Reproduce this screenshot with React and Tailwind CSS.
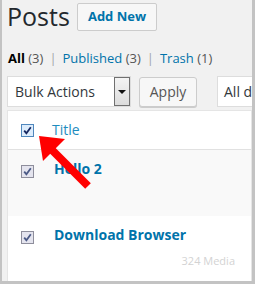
const CheckBox = ({ active }) => (
  <svg width="13" height="13" viewBox="0 0 13 13" className="block">
    <rect
      x="0.5"
      y="0.5"
      width="12"
      height="12"
      fill={active ? "#dcecfc" : "#e4e4ee"}
      stroke={active ? "#4f87bd" : "#8e8e9c"}
    />
    <path
      d="M3.2 6.6 L5.4 9.2 L9.8 3.2"
      fill="none"
      stroke={active ? "#152660" : "#4b5a86"}
      strokeWidth="1.8"
    />
  </svg>
);

const Sep = () => <span className="mx-[6px] text-[#a0a5aa]">|</span>;

const App = () => {
  return (
    <div
      className="relative w-[255px] h-[284px] overflow-hidden bg-[#f1f1f1] border-l-2 border-r-[3px] border-b-[3px] border-[#c3c3c3]"
      style={{ fontFamily: '"Open Sans", "Liberation Sans", sans-serif' }}
    >
      <div className="flex items-start pl-[5px]">
        <h1 className="w-[70px] mt-[1px] text-[25px] leading-[30px] text-[#23282d] font-normal">
          Posts
        </h1>
        <button className="mt-[3px] w-[80px] h-[28px] rounded-[2px] border border-[#ccc] bg-[#f7f7f7] text-[13px] font-bold text-[#0073aa]">
          Add New
        </button>
      </div>

      <div className="mt-[17px] pl-[6px] text-[13px] leading-[20px] whitespace-nowrap text-[#555]">
        <span className="font-bold text-[#000]">All</span> (3)
        <Sep />
        <span className="text-[#0073aa]">Published</span> (3)
        <Sep />
        <span className="text-[#0073aa]">Trash</span> (1)
      </div>

      <div className="mt-[8px] pl-[5px] flex items-center whitespace-nowrap">
        <div className="flex shrink-0 w-[124px] h-[31px] bg-white border border-[#ddd]">
          <span className="flex-1 pl-[7px] text-[14px] leading-[29px] text-[#32373c]">
            Bulk Actions
          </span>
          <span className="flex items-center justify-center w-[16px] h-[29px] border border-[#707070] bg-gradient-to-b from-[#f4f4f4] to-[#dcdcdc]">
            <span className="block w-0 h-0 border-l-[4px] border-r-[4px] border-t-[4px] border-l-transparent border-r-transparent border-t-[#111]" />
          </span>
        </div>
        <button className="shrink-0 ml-[8px] w-[58px] h-[30px] rounded-[3px] border border-[#ccc] bg-[#f7f7f7] shadow-[0_1px_0_#ccc] text-[14px] text-[#555]">
          Apply
        </button>
        <div className="shrink-0 ml-[20px] w-[80px] h-[31px] bg-white border border-[#ddd] pl-[6px] text-[14px] leading-[29px] text-[#32373c]">
          All dates
        </div>
      </div>

      <div className="mt-[3px] ml-[5px] w-[245px] bg-white border border-[#e5e5e5] text-[14px] leading-[20px]">
        <div className="flex items-start h-[39px] border-b border-[#e1e1e1]">
          <div className="w-[44px] pl-[13px] mt-[13px]">
            <CheckBox active />
          </div>
          <span className="mt-[9px] text-[#1e8cbe]">Title</span>
        </div>
        <div className="flex items-start h-[66px] bg-[#f9f9f9]">
          <div className="w-[46px] pl-[13px] mt-[15px]">
            <CheckBox />
          </div>
          <span className="mt-[9px] font-bold text-[#0073aa]">Hello 2</span>
        </div>
        <div className="flex items-start h-[66px]">
          <div className="w-[46px] pl-[13px] mt-[15px]">
            <CheckBox />
          </div>
          <div className="flex-1 mt-[9px]">
            <div className="font-bold text-[#0073aa]">Download Browser</div>
            <div className="mt-[8px] pr-[16px] text-right text-[11px] leading-[15px] text-[#d3d3d3]">
              324 Media
            </div>
          </div>
        </div>
      </div>

      <svg
        className="absolute left-0 top-0 pointer-events-none"
        width="255"
        height="284"
        viewBox="0 0 255 284"
      >
        <line x1="50" y1="150" x2="86" y2="186" stroke="#ff0000" strokeWidth="8" />
        <polygon points="37,136 63,139 41,161" fill="#ff0000" />
      </svg>
    </div>
  );
};

export default App;
